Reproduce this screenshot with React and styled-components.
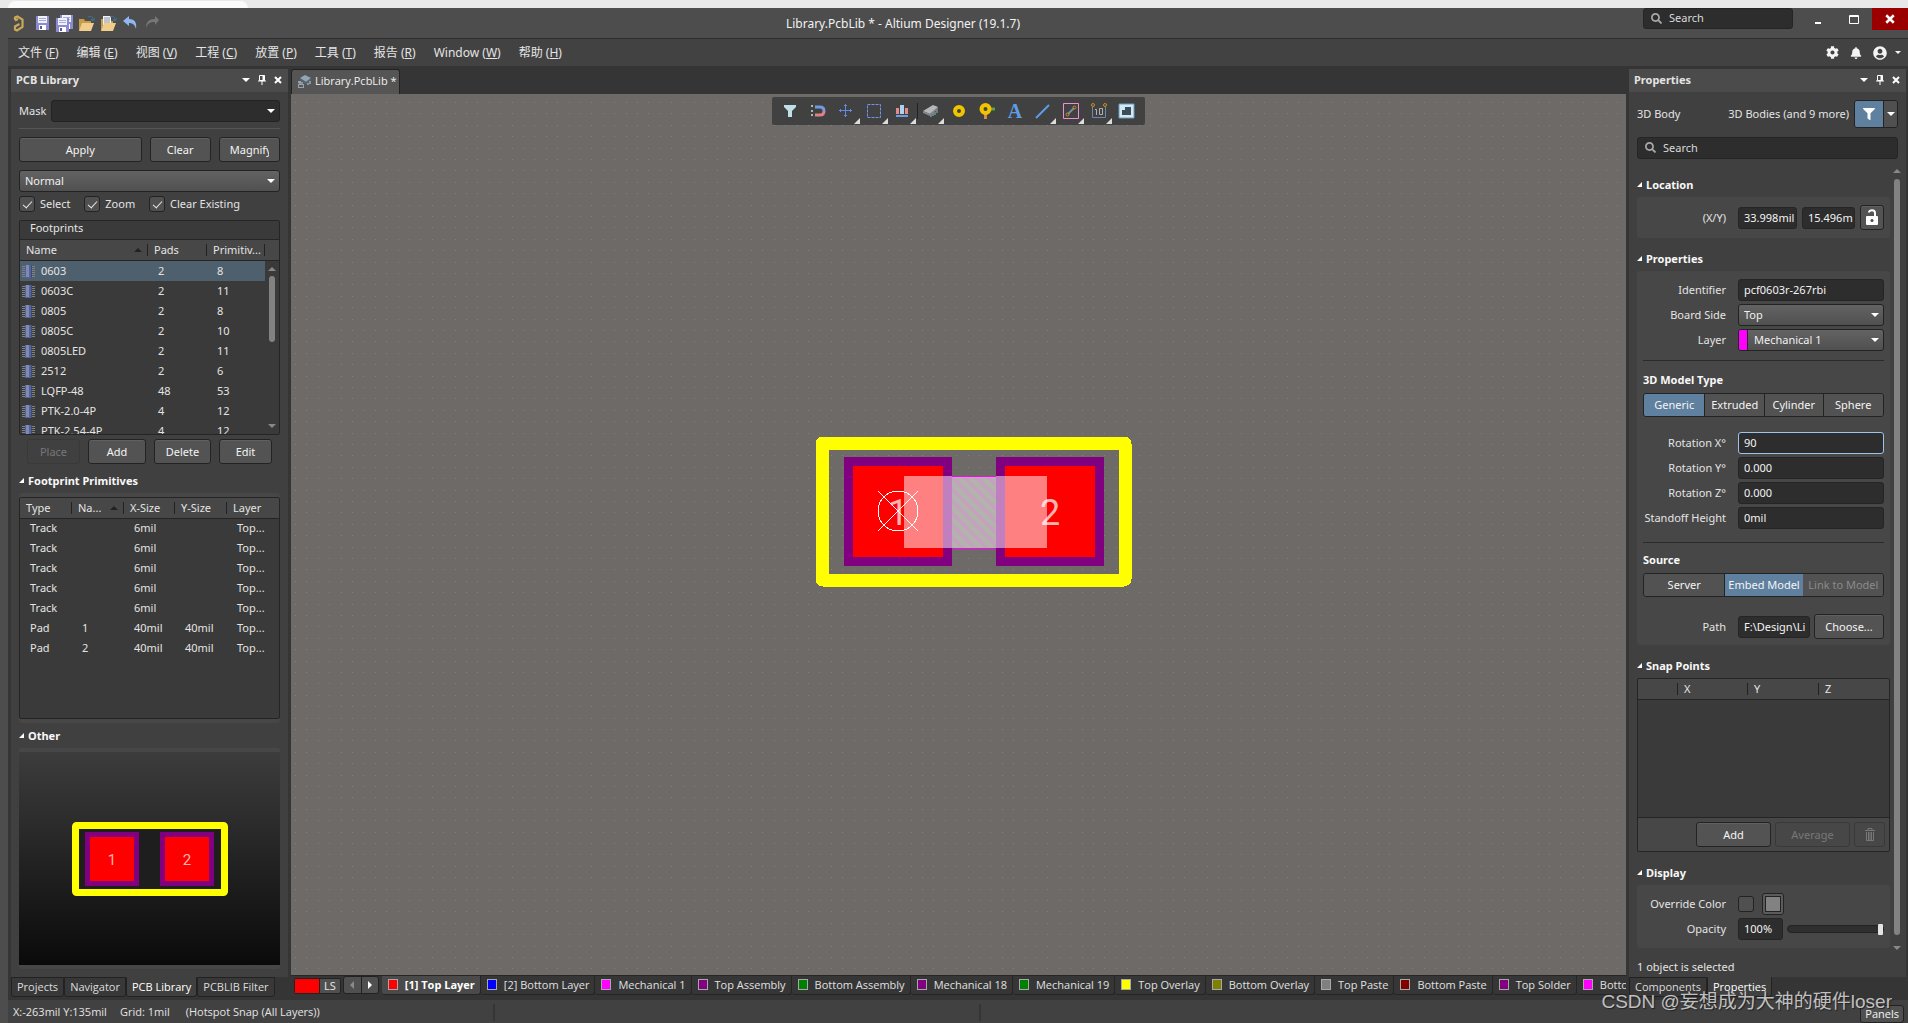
import { useState } from "react";
import styled, { createGlobalStyle, css } from "styled-components";
import { FaFilter, FaCog, FaBell, FaUserCircle, FaSearch } from "react-icons/fa";

const footprints = [
  ["0603", 2, 8],
  ["0603C", 2, 11],
  ["0805", 2, 8],
  ["0805C", 2, 10],
  ["0805LED", 2, 11],
  ["2512", 2, 6],
  ["LQFP-48", 48, 53],
  ["PTK-2.0-4P", 4, 12],
  ["PTK-2.54-4P", 4, 12],
];

const primitives = [
  ["Track", "", "6mil", "", "Top..."],
  ["Track", "", "6mil", "", "Top..."],
  ["Track", "", "6mil", "", "Top..."],
  ["Track", "", "6mil", "", "Top..."],
  ["Track", "", "6mil", "", "Top..."],
  ["Pad", "1", "40mil", "40mil", "Top..."],
  ["Pad", "2", "40mil", "40mil", "Top..."],
];

const layers = [
  ["[1] Top Layer", "#ff0000"],
  ["[2] Bottom Layer", "#0000ff"],
  ["Mechanical 1", "#ff00ff"],
  ["Top Assembly", "#800080"],
  ["Bottom Assembly", "#008000"],
  ["Mechanical 18", "#800080"],
  ["Mechanical 19", "#008000"],
  ["Top Overlay", "#ffff00"],
  ["Bottom Overlay", "#808000"],
  ["Top Paste", "#808080"],
  ["Bottom Paste", "#800000"],
  ["Top Solder", "#800080"],
  ["Bottom Solder", "#ff00ff"],
];

const menus = [
  ["文件", "F"],
  ["编辑", "E"],
  ["视图", "V"],
  ["工程", "C"],
  ["放置", "P"],
  ["工具", "T"],
  ["报告", "R"],
  ["Window", "W"],
  ["帮助", "H"],
];

/* ---------- icons ---------- */

const Down = () => (
  <svg width="8" height="4" viewBox="0 0 8 4">
    <path d="M0 0h8L4 4z" fill="currentColor" />
  </svg>
);

const Up = () => (
  <svg width="8" height="4" viewBox="0 0 8 4">
    <path d="M0 4h8L4 0z" fill="currentColor" />
  </svg>
);

const Pin = () => (
  <svg width="8" height="10" viewBox="0 0 8 10">
    <path d="M1.5 0.5h5v5h-5zM0 6h8M4 6v4" fill="none" stroke="currentColor" />
    <path d="M4.5 0h2v6h-2z" fill="currentColor" />
  </svg>
);

const Cross = ({ size = 8 }) => (
  <svg width={size} height={size} viewBox="0 0 8 8">
    <path d="M1 1l6 6M7 1l-6 6" stroke="currentColor" strokeWidth="2" />
  </svg>
);

const Fold = () => (
  <svg width="5" height="5" viewBox="0 0 5 5">
    <path d="M5 0v5H0z" fill="#fff" />
  </svg>
);

const Logo = () => (
  <svg width="12" height="17" viewBox="0 0 12 17">
    <path
      d="M2 5V2.5L4.500 1.500 9.500 4.500v7.500L4 15.500 2 14.500v-3l4.500-2.500M2 5.500l3-1.500"
      fill="none"
      stroke="#c9a857"
      strokeWidth="2.200"
    />
  </svg>
);

const Disk = ({ x = 0, y = 0 }) => (
  <g transform={`translate(${x} ${y})`}>
    <path d="M0 0h13v14H0z" fill="#8c8ad0" />
    <path d="M2 0h9v7H2z" fill="#eef0fa" />
    <path d="M3 2h7v1H3zM3 4h7v1H3z" fill="#a9abd8" />
    <path d="M3 9h7v5H3z" fill="#fff" />
    <path d="M4 10h2v3H4z" fill="#5b5aa0" />
  </g>
);

const Save = () => (
  <svg width="15" height="16" viewBox="0 0 15 16">
    <Disk x={1} y={1} />
  </svg>
);

const SaveAll = () => (
  <svg width="17" height="17" viewBox="0 0 17 17">
    <Disk x={4} />
    <path d="M0 3h13v14H0z" fill="#4d4d4d" />
    <Disk y={3} />
  </svg>
);

const Folder = ({ doc }) => (
  <svg width="17" height="17" viewBox="0 0 17 17">
    <path d="M1 4h5l1 2h6v9H1z" fill="#c79a4c" />
    {doc && <path d="M3 1h8v9H3z" fill="#f4f4f4" />}
    {doc && <path d="M4 3h6M4 5h6M4 7h6" stroke="#8894a8" />}
    <path d="M4 8h12l-3 8H1z" fill="#f0cd8a" />
    <path d="M10 2c3-2 5 0 5 3M13 4l2 2 2-3" fill="none" stroke="#38789c" />
  </svg>
);

const Undo = ({ flip }) => (
  <svg width="16" height="14" viewBox="0 0 16 14">
    <g transform={flip ? "translate(16 0) scale(-1 1)" : undefined}>
      {flip ? (
        <path
          d="M1 4l4-4v3c6 0 9 3 9 9-2-5-4-6-9-6v3z"
          fill="#777"
        />
      ) : (
        <path
          d="M1 5l6-5v3c6 0 8 4 7 10-1-4-3-6-7-6v3z"
          fill="#8fb8f2"
        />
      )}
    </g>
  </svg>
);

const LibIcon = () => (
  <svg width="15" height="15" viewBox="0 0 15 15">
    <path d="M3 4l5-3 6 3-5 4z" fill="#90a6b4" />
    <path d="M3 4l6 4v2L3 6zM9 8l5-4v2l-5 4z" fill="#53697a" />
    <path d="M3 7v3M5 8v3M11 9v2M13 7v3" stroke="#c7d4dd" />
    <path d="M1 7h3v2H1zM1 10h6v4H1z" fill="#9aa2a8" />
    <path d="M2 11h4v2H2z" fill="#4f5a62" />
  </svg>
);

const Chip = () => (
  <svg width="13" height="14" viewBox="0 0 13 14">
    <path
      d="M0 2.500h13M0 4.500h13M0 6.500h13M0 8.500h13M0 10.500h13M0 12.500h13"
      stroke="#7c8484"
    />
    <path d="M3 1h7v13H3z" fill="#56658f" />
    <path d="M4 1h3v12H4z" fill="#8088bc" />
    <path d="M9 1h1v13H9z" fill="#3c4a78" />
  </svg>
);

const LockIcon = () => (
  <svg width="14" height="17" viewBox="0 0 14 17">
    <path d="M4 3.500C4 0.500 10 0.500 10 4v4" fill="none" stroke="#fff" strokeWidth="2" />
    <path d="M1 8q0-1 1-1h10q1 0 1 1v7q0 1-1 1H2q-1 0-1-1z" fill="#fff" />
    <circle cx="7" cy="11.500" r="1.500" fill="#4a4a4a" />
  </svg>
);

const Trash = () => (
  <svg width="10" height="13" viewBox="0 0 10 13">
    <path d="M0 2.500h10M3 2V0.500h4V2" fill="none" stroke="currentColor" />
    <path
      d="M1.500 4v8.500h7V4M3.500 4v8M5 4v8M6.500 4v8"
      fill="none"
      stroke="currentColor"
    />
  </svg>
);

const toolIcons = [
  {
    name: "Filter",
    draw: <path d="M2 2h12v2l-4 4v6H6V8L2 4z" fill="#bfe0e6" />,
  },
  {
    name: "Snapping",
    draw: (
      <>
        <path d="M1 3h2M1 8h2M1 12h2" stroke="#9fbfae" strokeWidth="2" />
        <path d="M5 4h5q4 0 4 4" fill="none" stroke="#6f9be0" strokeWidth="3" />
        <path d="M5 12h5q4 0 4-4" fill="none" stroke="#e08088" strokeWidth="3" />
      </>
    ),
  },
  {
    name: "Move",
    corner: true,
    draw: (
      <path
        d="M7.500 1v13M1 7.500h13M6 2.500h3M6 12.500h3M2.500 6v3M12.500 6v3"
        stroke="#5f8ae0"
        fill="none"
      />
    ),
  },
  {
    name: "Select area",
    corner: true,
    draw: (
      <path
        d="M1.500 1.500h13v13h-13z"
        fill="none"
        stroke="#7394ee"
        strokeDasharray="3 1"
      />
    ),
  },
  {
    name: "Align",
    corner: true,
    draw: (
      <>
        <path d="M2 5h3v6H2zM11 5h3v6h-3z" fill="#e8888c" />
        <path d="M6 2h4v9H6z" fill="#a8d4ee" />
        <path d="M2 13h12" stroke="#6c9ce4" strokeWidth="2" />
      </>
    ),
  },
  {
    name: "Component",
    corner: true,
    split: true,
    draw: (
      <>
        <path d="M1 8l10-6 5 2-8 7z" fill="#b4b8ba" />
        <path d="M1 8l7 3v2l-7-3zM8 11l8-7v2l-8 7z" fill="#84888a" />
        <path d="M9 12v2M11 10v3M13 9v3M15 7v3" stroke="#8dbccc" />
      </>
    ),
  },
  {
    name: "Pad",
    draw: <circle cx="9" cy="8" r="4" fill="none" stroke="#f0c400" strokeWidth="4" />,
  },
  {
    name: "Via",
    draw: (
      <>
        <path d="M9 6h8" stroke="#54a83c" strokeWidth="3" />
        <path d="M7.500 8v8" stroke="#d0903c" strokeWidth="3" />
        <circle cx="7.500" cy="6" r="4" fill="#444" stroke="#f0c400" strokeWidth="4" />
      </>
    ),
  },
  {
    name: "String",
    draw: (
      <text x="9" y="15" textAnchor="middle" fontFamily="Liberation Serif, serif" fontSize="20" fontWeight="bold" fill="#5f9ce6">
        A
      </text>
    ),
  },
  {
    name: "Line",
    corner: true,
    draw: <path d="M2 15L15 2" stroke="#5f9ce6" strokeWidth="2" />,
  },
  {
    name: "Keepout",
    corner: true,
    draw: (
      <>
        <path d="M1.500 0.500h15v15H1.500z" fill="none" stroke="#f08cd8" />
        <path d="M6 11l6-6" stroke="#7488b0" strokeWidth="2" />
        <circle cx="5.500" cy="11.500" r="1.500" fill="none" stroke="#c8901c" />
        <circle cx="12.500" cy="4.500" r="1.500" fill="none" stroke="#c8901c" />
      </>
    ),
  },
  {
    name: "Dimension",
    corner: true,
    draw: (
      <>
        <path d="M2.500 4v10.500h13V4" fill="none" stroke="#6c88ac" />
        <circle cx="3" cy="2" r="1.500" fill="none" stroke="#c8901c" />
        <circle cx="15" cy="2" r="1.500" fill="none" stroke="#c8901c" />
        <path d="M5 6.500h1.500V12M9.500 5.500h3v6h-3z" fill="none" stroke="#b0b0b0" />
      </>
    ),
  },
  {
    name: "Region",
    draw: (
      <>
        <path d="M1 1h15v14H1z" fill="#cfeaf2" stroke="#6c9cc4" />
        <path d="M7 4h6v8H4V7h3z" fill="#3c4c5c" />
      </>
    ),
  },
];

/* ---------- footprint drawings ---------- */

const Board = () => (
  <BoardSvg aria-label="Footprint editor">
    <defs>
      <pattern id="grid" width="57" height="57" patternUnits="userSpaceOnUse">
        {[4, 15, 27, 38, 50].map((y) =>
          [4, 15, 27, 38, 50].map((x) => (
            <rect key={x + "-" + y} x={x} y={y + 4} width="1" height="1" fill="#84807d" />
          ))
        )}
      </pattern>
      <pattern id="hatch" width="12" height="12" patternUnits="userSpaceOnUse">
        <path d="M-1 5l8 8M5 -1l8 8M-1 11l2 2M11 -1l2 2" stroke="#bab6ac" />
        <path d="M-1 -1l14 14" stroke="#ff70ff" />
      </pattern>
    </defs>
    <rect width="100%" height="100%" fill="url(#grid)" />
    <g transform="translate(525 343)">
      <rect x="6" y="6" width="303" height="137" rx="1" fill="none" stroke="#ff0" strokeWidth="13" strokeLinejoin="round" />
      <rect x="28" y="20" width="108" height="109" fill="#800080" />
      <rect x="37" y="29" width="90" height="91" fill="#f00" />
      <rect x="180" y="20" width="108" height="109" fill="#800080" />
      <rect x="189" y="29" width="90" height="91" fill="#f00" />
      <PadName x="82" y="88" $size={36}>1</PadName>
      <PadName x="234" y="88" $size={36}>2</PadName>
      <rect x="88" y="39" width="143" height="72" fill="#fff" fillOpacity="0.5" />
      <rect x="136" y="39" width="44" height="72" fill="#b4b0ae" />
      <rect x="136" y="39" width="44" height="72" fill="url(#hatch)" />
      <path d="M136 39.500h44M136 111.500h44" stroke="#f0f" />
      <circle cx="82" cy="74" r="20" fill="none" stroke="#fff" />
      <path d="M62 54l40 40M102 54l-40 40" stroke="#fff" />
    </g>
  </BoardSvg>
);

const Preview = () => (
  <svg width="156" height="75" viewBox="0 0 156 75">
    <rect x="3.500" y="3.500" width="149" height="67" rx="1" fill="#1e1e1e" stroke="#ff0" strokeWidth="7" strokeLinejoin="round" />
    <rect x="13" y="10" width="54" height="54" fill="#800080" />
    <rect x="18" y="15" width="44" height="44" fill="#f00" />
    <rect x="88" y="10" width="54" height="54" fill="#800080" />
    <rect x="93" y="15" width="44" height="44" fill="#f00" />
    <PadName x="40" y="43" $size={15}>1</PadName>
    <PadName x="115" y="43" $size={15}>2</PadName>
  </svg>
);

/* ---------- shared pieces ---------- */

function PanelTop({ title }) {
  return (
    <PanelHeader>
      <PanelTitle>{title}</PanelTitle>
      <IconButton aria-label="Menu"><Down /></IconButton>
      <IconButton aria-label="Pin"><Pin /></IconButton>
      <IconButton aria-label="Close"><Cross /></IconButton>
    </PanelHeader>
  );
}

function Dropdown({ id, label, options, dark, indent, swatch }) {
  return (
    <SelectWrap>
      <Select id={id} aria-label={label} $dark={dark} $indent={indent}>
        {options.map((o) => (
          <option key={o}>{o}</option>
        ))}
      </Select>
      {swatch && <SelectSwatch />}
      <SelectArrow><Down /></SelectArrow>
    </SelectWrap>
  );
}

function Field({ id, label, value, active }) {
  const [text, setText] = useState(value);
  return (
    <FormRow>
      <FormLabel htmlFor={id}>{label}</FormLabel>
      <TextInput id={id} value={text} onChange={(e) => setText(e.target.value)} $active={active} />
    </FormRow>
  );
}

function LibraryPanel() {
  return (
    <Panel>
      <PanelTop title="PCB Library" />
      <LibraryBody>
        <MaskRow>
          <label htmlFor="mask">Mask</label>
          <Dropdown id="mask" options={[""]} dark />
        </MaskRow>
        <Rule />
        <ActionRow>
          <Button>Apply</Button>
          <Button>Clear</Button>
          <Button><Clip>Magnify</Clip></Button>
        </ActionRow>
        <Dropdown label="Mode" options={["Normal"]} />
        <CheckRow>
          <Check><CheckBox defaultChecked />Select</Check>
          <Check><CheckBox defaultChecked />Zoom</Check>
          <Check><CheckBox defaultChecked />Clear Existing</Check>
        </CheckRow>
        <FootprintBox>
          <BoxCaption>Footprints</BoxCaption>
          <Table>
            <colgroup>
              <col />
              <col width="59" />
              <col width="58" />
              <col width="14" />
            </colgroup>
            <thead>
              <tr>
                <Th><HeadCell>Name<Sort><Up /></Sort></HeadCell></Th>
                <Th><HeadCell>Pads</HeadCell></Th>
                <Th><HeadCell>Primitiv...</HeadCell></Th>
                <Th />
              </tr>
            </thead>
            <tbody>
              {footprints.map(([name, pads, count], i) => (
                <Row key={name} $selected={i === 0}>
                  <NameCell><Chip />{name}</NameCell>
                  <Td>{pads}</Td>
                  <Td>{count}</Td>
                </Row>
              ))}
            </tbody>
          </Table>
          <ListScroll>
            <Up />
            <ListThumb />
            <Down />
          </ListScroll>
        </FootprintBox>
        <EditRow>
          <Button disabled>Place</Button>
          <Button>Add</Button>
          <Button>Delete</Button>
          <Button>Edit</Button>
        </EditRow>
        <SectionTitle><Fold />Footprint Primitives</SectionTitle>
        <Inset>
          <PrimitiveBox>
            <Table>
              <colgroup>
                <col width="52" />
                <col width="52" />
                <col width="51" />
                <col width="52" />
                <col />
              </colgroup>
              <thead>
                <tr>
                  <Th><HeadCell>Type</HeadCell></Th>
                  <Th><HeadCell>Na...<Sort><Up /></Sort></HeadCell></Th>
                  <Th><HeadCell>X-Size</HeadCell></Th>
                  <Th><HeadCell>Y-Size</HeadCell></Th>
                  <Th><HeadCell $last>Layer</HeadCell></Th>
                </tr>
              </thead>
              <tbody>
                {primitives.map((row, i) => (
                  <Row key={i}>
                    {row.map((cell, j) => (
                      <Td key={j}>{cell}</Td>
                    ))}
                  </Row>
                ))}
              </tbody>
            </Table>
          </PrimitiveBox>
        </Inset>
        <SectionTitle><Fold />Other</SectionTitle>
        <PreviewInset>
          <PreviewBox><Preview /></PreviewBox>
        </PreviewInset>
      </LibraryBody>
      <PanelTabs>
        <PanelTab>Projects</PanelTab>
        <PanelTab>Navigator</PanelTab>
        <PanelTab $active>PCB Library</PanelTab>
        <PanelTab>PCBLIB Filter</PanelTab>
      </PanelTabs>
    </Panel>
  );
}

function PropertiesPanel() {
  return (
    <Panel>
      <PanelTop title="Properties" />
      <PropertiesBody>
        <ObjectRow>
          <ObjectName>3D Body</ObjectName>
          <span>3D Bodies (and 9 more)</span>
          <FilterGroup>
            <FilterButton aria-label="Filter"><FaFilter size={12} /></FilterButton>
            <FilterMore aria-label="Filter options"><Down /></FilterMore>
          </FilterGroup>
        </ObjectRow>
        <SearchBox>
          <FaSearch size={11} />
          <SearchInput placeholder="Search" aria-label="Search properties" />
        </SearchBox>
        <ScrollArea>
          <Sections>
            <SectionTitle><Fold />Location</SectionTitle>
            <Group>
              <FormRow>
                <FormLabel htmlFor="loc-x">(X/Y)</FormLabel>
                <XYFields>
                  <TextInput id="loc-x" defaultValue="33.998mil" />
                  <TextInput aria-label="Y" defaultValue="15.496m" />
                  <LockButton aria-label="Lock"><LockIcon /></LockButton>
                </XYFields>
              </FormRow>
            </Group>
            <SectionTitle $spaced><Fold />Properties</SectionTitle>
            <Group $tight>
              <Fields>
                <Field id="identifier" label="Identifier" value="pcf0603r-267rbi" />
                <FormRow>
                  <FormLabel htmlFor="side">Board Side</FormLabel>
                  <Dropdown id="side" options={["Top", "Bottom"]} />
                </FormRow>
                <FormRow>
                  <FormLabel htmlFor="layer">Layer</FormLabel>
                  <Dropdown id="layer" options={["Mechanical 1"]} indent swatch />
                </FormRow>
              </Fields>
              <DarkRule />
              <SubTitle>3D Model Type</SubTitle>
              <Segments $columns="61fr 60fr 59fr 61fr">
                <Segment $on>Generic</Segment>
                <Segment>Extruded</Segment>
                <Segment>Cylinder</Segment>
                <Segment>Sphere</Segment>
              </Segments>
              <Fields>
                <Field id="rot-x" label="Rotation X°" value="90" active />
                <Field id="rot-y" label="Rotation Y°" value="0.000" />
                <Field id="rot-z" label="Rotation Z°" value="0.000" />
                <Field id="standoff" label="Standoff Height" value="0mil" />
              </Fields>
              <DarkRule $far />
              <SubTitle>Source</SubTitle>
              <Segments $columns="81fr 79fr 81fr" $far>
                <Segment>Server</Segment>
                <Segment $on>Embed Model</Segment>
                <Segment disabled>Link to Model</Segment>
              </Segments>
              <FormRow>
                <FormLabel htmlFor="path">Path</FormLabel>
                <PathFields>
                  <TextInput id="path" defaultValue="F:\Design\Li" />
                  <Button>Choose...</Button>
                </PathFields>
              </FormRow>
            </Group>
            <SectionTitle $spaced><Fold />Snap Points</SectionTitle>
            <SnapBox>
              <Table>
                <colgroup>
                  <col width="40" />
                  <col width="70" />
                  <col width="71" />
                  <col />
                </colgroup>
                <thead>
                  <tr>
                    <Th><HeadCell /></Th>
                    <Th><HeadCell>X</HeadCell></Th>
                    <Th><HeadCell>Y</HeadCell></Th>
                    <Th><HeadCell $last>Z</HeadCell></Th>
                  </tr>
                </thead>
              </Table>
              <SnapFooter>
                <Button>Add</Button>
                <Button disabled>Average</Button>
                <Button disabled aria-label="Delete"><Trash /></Button>
              </SnapFooter>
            </SnapBox>
            <SectionTitle $spaced><Fold />Display</SectionTitle>
            <Group>
              <Fields>
                <FormRow>
                  <FormLabel htmlFor="override">Override Color</FormLabel>
                  <ColorFields>
                    <CheckBox id="override" />
                    <ColorButton aria-label="Color"><ColorFill /></ColorButton>
                  </ColorFields>
                </FormRow>
                <FormRow>
                  <FormLabel htmlFor="opacity">Opacity</FormLabel>
                  <OpacityFields>
                    <TextInput id="opacity" defaultValue="100%" />
                    <Slider aria-label="Opacity slider" defaultValue="100" />
                  </OpacityFields>
                </FormRow>
              </Fields>
            </Group>
          </Sections>
          <SideScroll>
            <Up />
            <SideThumb />
            <Down />
          </SideScroll>
        </ScrollArea>
        <Selected>1 object is selected</Selected>
      </PropertiesBody>
      <PanelTabs>
        <PanelTab>Components</PanelTab>
        <PanelTab $active>Properties</PanelTab>
      </PanelTabs>
    </Panel>
  );
}

export default function App() {
  return (
    <Window>
      <GlobalStyle />
      <BrowserStrip><BrowserTab /></BrowserStrip>
      <TitleBar>
        <QuickTools>
          <Logo />
          <QuickButton aria-label="Save"><Save /></QuickButton>
          <QuickButton aria-label="Save all"><SaveAll /></QuickButton>
          <QuickButton aria-label="Open"><Folder /></QuickButton>
          <QuickButton aria-label="Open project"><Folder doc /></QuickButton>
          <QuickButton aria-label="Undo"><Undo /></QuickButton>
          <QuickButton aria-label="Redo"><Undo flip /></QuickButton>
        </QuickTools>
        <AppTitle>Library.PcbLib * - Altium Designer (19.1.7)</AppTitle>
        <WindowTools>
          <TitleSearch>
            <FaSearch size={11} />
            <SearchInput placeholder="Search" aria-label="Search" />
          </TitleSearch>
          <WindowButton aria-label="Minimize">
            <svg width="10" height="10"><path d="M2 8h6v2H2z" fill="#fff" /></svg>
          </WindowButton>
          <WindowButton aria-label="Maximize">
            <svg width="10" height="9"><path d="M0.500 0.500h9v8h-9zM0 1.500h10" fill="none" stroke="#fff" /></svg>
          </WindowButton>
          <WindowButton aria-label="Close" $close><Cross size={10} /></WindowButton>
        </WindowTools>
      </TitleBar>
      <Frame>
        <MenuBar>
          {menus.map(([name, key]) => (
            <MenuItem key={key}>
              {name} (<u>{key}</u>)
            </MenuItem>
          ))}
          <UserTools>
            <FaCog size={13} />
            <FaBell size={12} />
            <FaUserCircle size={14} />
            <SmallDown>
              <svg width="6" height="3"><path d="M0 0h6L3 3z" fill="currentColor" /></svg>
            </SmallDown>
          </UserTools>
        </MenuBar>
        <Main>
          <LibraryPanel />
          <Editor>
            <DocTabs>
              <DocTab><LibIcon />Library.PcbLib *</DocTab>
            </DocTabs>
            <Canvas>
              <Board />
              <Toolbar>
                {toolIcons.map((t) => (
                  <ToolButton key={t.name} aria-label={t.name} $corner={t.corner} $split={t.split}>
                    <svg width="16" height="16" viewBox="0 0 16 16" overflow="visible">{t.draw}</svg>
                  </ToolButton>
                ))}
              </Toolbar>
            </Canvas>
            <LayerBar>
              <LayerSet><LayerSetColor />LS</LayerSet>
              <Pager>
                <PagerButton disabled aria-label="Previous layers">
                  <svg width="4" height="8"><path d="M4 0v8L0 4z" fill="currentColor" /></svg>
                </PagerButton>
                <PagerButton aria-label="Next layers">
                  <svg width="4" height="8"><path d="M0 0v8l4-4z" fill="currentColor" /></svg>
                </PagerButton>
              </Pager>
              {layers.map(([name, color], i) => (
                <LayerTab key={name} $active={i === 0}>
                  <LayerColor $color={color} />
                  {name}
                </LayerTab>
              ))}
            </LayerBar>
          </Editor>
          <PropertiesPanel />
        </Main>
        <StatusBar>
          <StatusMain>
            <span>X:-263mil Y:135mil</span>
            <span>Grid: 1mil</span>
            <StatusHint>(Hotspot Snap (All Layers))</StatusHint>
          </StatusMain>
          <StatusCell />
          <PanelsButton>Panels</PanelsButton>
        </StatusBar>
      </Frame>
      <Watermark>CSDN @妄想成为大神的硬件loser</Watermark>
    </Window>
  );
}

/* ---------- styles ---------- */

const narrowFont = `"Open Sans", "Noto Sans", sans-serif`;

const GlobalStyle = createGlobalStyle`
  * { box-sizing: border-box; }
  body {
    margin: 0;
    background: #4d4d4d;
    color: #e4e4e4;
    font: 11px/16px "Noto Sans", "Noto Sans CJK SC", sans-serif;
  }
  button, input, select {
    margin: 0;
    font: inherit;
    color: inherit;
  }
  svg { flex: none; display: block; }
`;

const Window = styled.div`
  position: relative;
  display: flex;
  flex-direction: column;
  height: 100vh;
  overflow: hidden;
  white-space: nowrap;
`;
const BrowserStrip = styled.div`
  flex: none;
  height: 8px;
  padding: 1px 8px 0;
  background: #e8e8e8;
`;
const BrowserTab = styled.div`
  width: 240px;
  height: 7px;
  border-radius: 7px 7px 0 0;
  background: #fafafa;
`;
const TitleBar = styled.header`
  flex: none;
  display: flex;
  height: 30px;
  background: #4d4d4d;
`;
const QuickTools = styled.div`
  display: flex;
  align-items: center;
  padding-left: 13px;
`;
const IconButton = styled.button`
  display: flex;
  align-items: center;
  justify-content: center;
  padding: 0;
  border: 0;
  background: none;
`;
const QuickButton = styled(IconButton)`
  width: 22px;
  svg + & {
    margin-left: 6px;
  }
`;
const AppTitle = styled.h1`
  flex: 1;
  margin: 0;
  font-size: 12px;
  font-weight: normal;
  line-height: 31px;
  text-align: center;
  color: #f2f2f2;
`;
const WindowTools = styled.div`
  display: flex;
  align-items: flex-start;
`;
const searchBox = css`
  display: flex;
  align-items: center;
  gap: 7px;
  padding: 0 8px 1px 7px;
  border: 1px solid #252525;
  border-radius: 3px;
  background: #2d2d2d;
  color: #a8a8a8;
`;
const TitleSearch = styled.div`
  ${searchBox}
  width: 150px;
  height: 21px;
  margin-right: 7px;
`;
const SearchBox = styled.div`
  ${searchBox}
  height: 22px;
  margin: 9px 0 0;
`;
const SearchInput = styled.input`
  flex: 1;
  min-width: 0;
  padding: 0;
  border: 0;
  outline: 0;
  background: none;
  color: #e4e4e4;
  &::placeholder {
    color: #dadada;
  }
`;
const WindowButton = styled.button`
  display: flex;
  align-items: center;
  justify-content: center;
  width: 36px;
  height: 22px;
  padding: 0;
  border: 0;
  color: #fff;
  background: ${(p) => (p.$close ? "#9b0000" : "none")};
`;
const Frame = styled.div`
  flex: 1;
  min-height: 0;
  display: flex;
  flex-direction: column;
  margin-left: 8px;
`;
const MenuBar = styled.nav`
  flex: none;
  display: flex;
  align-items: center;
  gap: 18px;
  height: 28px;
  padding: 0 7px 0 10px;
  border-top: 1px solid #2d2d2d;
  background: #424242;
`;
const MenuItem = styled.button`
  padding: 0;
  border: 0;
  background: none;
  font-size: 12px;
`;
const UserTools = styled.div`
  display: flex;
  align-items: center;
  gap: 11px;
  margin-left: auto;
  color: #f4f4f4;
`;
const SmallDown = styled.span`
  margin-left: -3px;
`;
const Main = styled.main`
  flex: 1;
  min-height: 0;
  display: grid;
  grid-template-columns: 277px minmax(0, 1fr) 277px;
  gap: 3px;
  padding: 0 2px 0 3px;
  background: #353535;
`;
const Panel = styled.section`
  display: flex;
  flex-direction: column;
  min-height: 0;
  padding-top: 3px;
`;
const PanelHeader = styled.header`
  flex: none;
  display: flex;
  align-items: center;
  gap: 8px;
  height: 23px;
  padding: 0 6px 1px 5px;
  background: #4b4b4b;
  color: #fff;
`;
const PanelTitle = styled.h2`
  flex: 1;
  margin: 0;
  font-size: 11px;
  color: #e4e4e4;
`;
const LibraryBody = styled.div`
  flex: 1;
  min-height: 0;
  display: flex;
  flex-direction: column;
  padding: 8px;
  background: #404040;
`;
const PropertiesBody = styled(LibraryBody)`
  padding-bottom: 0;
`;
const MaskRow = styled.div`
  display: grid;
  grid-template-columns: 24px 1fr;
  align-items: center;
  gap: 8px;
`;
const Rule = styled.div`
  height: 1px;
  margin: 6px 0 8px;
  background: #565656;
`;
const Button = styled.button`
  display: flex;
  align-items: center;
  justify-content: center;
  height: 25px;
  padding: 0 8px;
  border: 1px solid #232323;
  border-radius: 3px;
  background: #535353;
  box-shadow: inset 0 1px #606060;
  color: #f4f4f4;
  &:disabled {
    border-color: #393939;
    background: none;
    box-shadow: none;
    color: #777;
  }
`;
const Clip = styled.span`
  min-width: 0;
  overflow: hidden;
`;
const ActionRow = styled.div`
  display: grid;
  grid-template-columns: 2fr 1fr 1fr;
  gap: 8px;
  margin-bottom: 8px;
  ${Button} {
    min-width: 0;
    padding: 0 10px;
  }
`;
const SelectWrap = styled.div`
  position: relative;
  display: grid;
  min-width: 0;
`;
const Select = styled.select`
  appearance: none;
  height: 22px;
  padding: 0 20px 0 ${(p) => (p.$indent ? 15 : 5)}px;
  border: 1px solid #232323;
  border-radius: 3px;
  outline: 0;
  background: ${(p) => (p.$dark ? "#2d2d2d" : "linear-gradient(#636363, #505050)")};
  color: #f0f0f0;
`;
const SelectSwatch = styled.span`
  position: absolute;
  top: 1px;
  bottom: 1px;
  left: 1px;
  width: 9px;
  border-right: 1px solid #232323;
  border-radius: 2px 0 0 2px;
  background: #f0f;
`;
const SelectArrow = styled.span`
  position: absolute;
  top: 9px;
  right: 5px;
  color: #fff;
  pointer-events: none;
`;
const CheckRow = styled.div`
  display: flex;
  justify-content: space-between;
  margin: 4px 0 8px;
  padding-right: 40px;
`;
const Check = styled.label`
  display: flex;
  align-items: center;
  gap: 5px;
`;
const CheckBox = styled.input.attrs({ type: "checkbox" })`
  appearance: none;
  position: relative;
  width: 16px;
  height: 16px;
  border: 1px solid #232323;
  border-radius: 3px;
  background: #505050;
  &:checked::after {
    content: "";
    position: absolute;
    left: 5px;
    top: 2px;
    width: 4px;
    height: 8px;
    border: solid #e8e8e8;
    border-width: 0 1px 1px 0;
    transform: rotate(42deg);
  }
`;
const box = css`
  border: 1px solid #252525;
  border-radius: 2px;
  background: #3a3a3a;
  overflow: hidden;
`;
const FootprintBox = styled.div`
  ${box}
  position: relative;
  flex: none;
  height: 215px;
`;
const BoxCaption = styled.div`
  height: 19px;
  padding-left: 10px;
  border-bottom: 1px solid #252525;
  line-height: 14px;
`;
const Table = styled.table`
  width: 100%;
  table-layout: fixed;
  border-collapse: collapse;
`;
const Th = styled.th`
  height: 20px;
  padding: 0;
  border-bottom: 1px solid #252525;
  background: #474747;
  font-weight: normal;
  text-align: left;
`;
const HeadCell = styled.div`
  display: flex;
  align-items: center;
  height: 12px;
  padding-left: 6px;
  border-right: ${(p) => (p.$last ? 0 : 1)}px solid #222;
  line-height: 12px;
`;
const Sort = styled.span`
  margin: 0 5px 0 auto;
  color: #222;
`;
const Td = styled.td`
  height: 20px;
  padding: 0 0 0 10px;
`;
const NameCell = styled(Td)`
  display: flex;
  align-items: center;
  gap: 6px;
  padding-left: 2px;
`;
const Row = styled.tr`
  ${Td} {
    background: ${(p) => (p.$selected ? "#4e606e" : "none")};
  }
`;
const scroll = css`
  display: flex;
  flex-direction: column;
  align-items: center;
  color: #888;
`;
const ListScroll = styled.div`
  ${scroll}
  position: absolute;
  top: 40px;
  right: 0;
  bottom: 0;
  width: 14px;
  padding: 6px 0;
`;
const ListThumb = styled.div`
  width: 6px;
  height: 66px;
  margin: 5px 0 auto;
  border-radius: 3px;
  background: #828282;
`;
const EditRow = styled.div`
  display: grid;
  grid-template-columns: 53px 58px 57px 53px;
  justify-content: space-between;
  margin: 4px 0;
  padding: 0 8px;
`;
const SectionTitle = styled.h3`
  flex: none;
  display: flex;
  align-items: center;
  gap: 4px;
  height: 25px;
  margin: ${(p) => (p.$spaced ? 8 : 0)}px 0 0;
  font-size: 11px;
  color: #f8f8f8;
`;
const Inset = styled.div`
  flex: none;
  padding: 4px 0;
  border-radius: 3px;
  background: #474747;
`;
const PrimitiveBox = styled.div`
  ${box}
  height: 222px;
`;
const PreviewInset = styled(Inset)`
  flex: 1;
  display: flex;
  min-height: 0;
`;
const PreviewBox = styled.div`
  flex: 1;
  display: flex;
  align-items: center;
  justify-content: center;
  padding-top: 2px;
  background: linear-gradient(#3c3c3c, #0a0a0a);
`;
const PanelTabs = styled.div`
  flex: none;
  display: flex;
  height: 23px;
`;
const PanelTab = styled.button`
  height: 20px;
  padding: 0 5px;
  border: 1px solid #222;
  border-top-color: ${(p) => (p.$active ? "#404040" : "#222")};
  border-radius: 0 0 3px 3px;
  background: ${(p) => (p.$active ? "#404040" : "#383838")};
  color: ${(p) => (p.$active ? "#fff" : "#dcdcdc")};
  font-family: ${narrowFont};
`;
const Editor = styled.section`
  display: flex;
  flex-direction: column;
  min-width: 0;
`;
const DocTabs = styled.div`
  flex: none;
  display: flex;
  align-items: flex-end;
  height: 28px;
`;
const DocTab = styled.button`
  display: flex;
  align-items: center;
  gap: 3px;
  height: 25px;
  padding: 0 2px 2px 5px;
  border: 1px solid #222;
  border-bottom: 0;
  border-radius: 3px 3px 0 0;
  background: #555;
  color: #f0f0f0;
  font-family: ${narrowFont};
`;
const Canvas = styled.div`
  position: relative;
  flex: 1;
  min-height: 0;
  display: flex;
  justify-content: center;
  align-items: flex-start;
  overflow: hidden;
  background: #6e6a68;
`;
const BoardSvg = styled.svg`
  position: absolute;
  inset: 0;
  width: 100%;
  height: 100%;
  shape-rendering: crispEdges;
`;
const PadName = styled.text`
  font: ${(p) => p.$size}px Roboto, sans-serif;
  fill: #ffb4b4;
  text-anchor: middle;
`;
const Toolbar = styled.div`
  position: relative;
  display: flex;
  margin-top: 3px;
  padding: 0 4px 0 5px;
  border-radius: 2px;
  background: #414141;
`;
const ToolButton = styled.button`
  position: relative;
  display: flex;
  align-items: center;
  justify-content: center;
  width: 28px;
  height: 28px;
  padding: 0 3px 0 0;
  border: 0;
  background: none;
  &::before {
    content: "";
    display: ${(p) => (p.$split ? "block" : "none")};
    position: absolute;
    left: 0;
    top: 6px;
    width: 1px;
    height: 16px;
    background: #222;
  }
  &::after {
    content: "";
    display: ${(p) => (p.$corner ? "block" : "none")};
    position: absolute;
    right: 1px;
    bottom: 1px;
    border: 3px solid transparent;
    border-right-color: #ddd;
    border-bottom-color: #ddd;
  }
`;
const LayerBar = styled.div`
  flex: none;
  display: flex;
  align-items: flex-start;
  height: 25px;
  border-top: 1px solid #252525;
  overflow: hidden;
`;
const LayerSet = styled.button`
  flex: none;
  display: flex;
  align-items: center;
  gap: 4px;
  height: 16px;
  margin: 2px 2px 0 3px;
  padding: 0 4px 0 0;
  border: 1px solid #222;
  border-radius: 2px;
  background: #505050;
  line-height: 14px;
`;
const LayerSetColor = styled.span`
  width: 25px;
  height: 14px;
  border-right: 1px solid #222;
  background: #f00;
`;
const Pager = styled.div`
  flex: none;
  display: flex;
  height: 18px;
  margin-right: 3px;
  border: 1px solid #222;
  border-radius: 3px;
  background: #505050;
`;
const PagerButton = styled.button`
  display: flex;
  align-items: center;
  justify-content: center;
  width: 17px;
  padding: 0;
  border: 0;
  background: none;
  color: #fff;
  & + & {
    border-left: 1px solid #222;
  }
  &:disabled {
    color: #8a8a8a;
  }
`;
const LayerTab = styled.button`
  flex: none;
  display: flex;
  align-items: center;
  gap: 7px;
  height: 19px;
  padding: 0 5px 1px 6px;
  border: solid #252525;
  border-width: 0 1px 1px 0;
  border-radius: 0 0 3px 3px;
  background: ${(p) => (p.$active ? "#4a4a4a" : "#363636")};
  color: ${(p) => (p.$active ? "#fff" : "#e0e0e0")};
  font-family: ${narrowFont};
  font-weight: ${(p) => (p.$active ? "bold" : "normal")};
`;
const LayerColor = styled.span`
  width: 10px;
  height: 11px;
  border: 1px solid #a8a8a8;
  background: ${(p) => p.$color};
`;
const ObjectRow = styled.div`
  flex: none;
  display: flex;
  align-items: center;
  height: 28px;
`;
const ObjectName = styled.span`
  flex: 1;
`;
const FilterGroup = styled.div`
  display: flex;
  height: 28px;
  margin-left: 5px;
  border: 1px solid #232323;
  border-radius: 3px;
  overflow: hidden;
`;
const FilterButton = styled.button`
  display: flex;
  align-items: center;
  justify-content: center;
  width: 28px;
  padding: 0;
  border: 0;
  background: #6080a0;
  color: #fff;
`;
const FilterMore = styled(FilterButton)`
  width: 14px;
  border-left: 1px solid #232323;
  background: #505050;
`;
const ScrollArea = styled.div`
  flex: 1;
  min-height: 0;
  display: flex;
  gap: 3px;
  margin-right: -5px;
`;
const Sections = styled.div`
  flex: 1;
  min-width: 0;
  padding-top: 13px;
`;
const SideScroll = styled.div`
  ${scroll}
  width: 8px;
  padding: 10px 0 7px;
  margin-right: 2px;
`;
const SideThumb = styled.div`
  flex: 1;
  width: 6px;
  margin: 6px 0 11px;
  border-radius: 3px;
  background: #828282;
`;
const Group = styled.div`
  padding: 8px 6px ${(p) => (p.$tight ? 6 : 8)}px;
  border-radius: 3px;
  background: #474747;
`;
const Fields = styled.div`
  display: grid;
  gap: 3px;
`;
const FormRow = styled.div`
  display: grid;
  grid-template-columns: 83px minmax(0, 1fr);
  gap: 12px;
  align-items: center;
`;
const FormLabel = styled.label`
  display: flex;
  justify-content: flex-end;
`;
const TextInput = styled.input`
  width: 100%;
  min-width: 0;
  height: 22px;
  padding: 0 1px 1px 5px;
  border: 1px solid ${(p) => (p.$active ? "#9cc4ec" : "#252525")};
  border-radius: 3px;
  outline: 0;
  background: #2d2d2d;
  color: #f4f4f4;
`;
const XYFields = styled.div`
  display: grid;
  grid-template-columns: 59fr 53fr 24px;
  align-items: center;
  gap: 5px;
`;
const LockButton = styled(Button)`
  padding: 0;
`;
const DarkRule = styled.div`
  height: 1px;
  margin: ${(p) => (p.$far ? "13px 0 4px" : "9px 0 6px")};
  background: #2b2b2b;
`;
const SubTitle = styled.h4`
  margin: 0;
  font-size: 11px;
  line-height: 26px;
  color: #f8f8f8;
`;
const Segments = styled.div`
  display: grid;
  grid-template-columns: ${(p) => p.$columns};
  height: 24px;
  margin-bottom: ${(p) => (p.$far ? 17 : 15)}px;
  border: 1px solid #232323;
  border-radius: 3px;
  overflow: hidden;
`;
const Segment = styled.button`
  min-width: 0;
  padding: 0;
  border: 0;
  background: ${(p) => (p.$on ? "#6080a0" : "#525252")};
  color: #f4f4f4;
  & + & {
    border-left: 1px solid #232323;
  }
  &:disabled {
    border-left-color: #525252;
    color: #8a8a8a;
  }
`;
const PathFields = styled.div`
  display: grid;
  grid-template-columns: 1fr 70px;
  align-items: center;
  gap: 4px;
`;
const SnapBox = styled.div`
  ${box}
  display: flex;
  flex-direction: column;
  justify-content: space-between;
  height: 174px;
`;
const SnapFooter = styled.div`
  display: grid;
  grid-template-columns: 75px 75px 31px;
  justify-content: flex-end;
  gap: 4px;
  padding: 4px;
  border-top: 1px solid #252525;
  background: #474747;
`;
const ColorFields = styled.div`
  display: flex;
  align-items: center;
  gap: 8px;
`;
const ColorButton = styled.button`
  width: 22px;
  height: 22px;
  padding: 2px;
  border: 1px solid #232323;
  border-radius: 3px;
  background: #5c5c5c;
`;
const ColorFill = styled.span`
  display: block;
  height: 16px;
  border: 1px solid #222;
  background: #828282;
`;
const OpacityFields = styled.div`
  display: grid;
  grid-template-columns: 45px 1fr;
  align-items: center;
  gap: 4px;
`;
const Slider = styled.input.attrs({ type: "range" })`
  appearance: none;
  width: 100%;
  min-width: 0;
  height: 8px;
  border: 1px solid #222;
  border-radius: 4px;
  background: #2f2f2f;
  &::-webkit-slider-thumb {
    appearance: none;
    width: 5px;
    height: 11px;
    border-radius: 1px;
    background: #e4e4e4;
  }
`;
const Selected = styled.div`
  flex: none;
  height: 20px;
  line-height: 20px;
`;
const StatusBar = styled.footer`
  flex: none;
  display: flex;
  align-items: center;
  height: 23px;
  padding: 1px 4px 0 5px;
  background: #414141;
  font-family: ${narrowFont};
`;
const statusCell = css`
  display: flex;
  height: 17px;
  border-right: 2px solid #353535;
`;
const StatusMain = styled.div`
  ${statusCell}
  width: 482px;
  gap: 13px;
`;
const StatusHint = styled.span`
  padding-left: 3px;
`;
const StatusCell = styled.div`
  ${statusCell}
  width: 486px;
`;
const PanelsButton = styled.button`
  align-self: flex-end;
  height: 18px;
  margin-left: auto;
  padding: 0 4px;
  border: 1px solid #222;
  border-radius: 3px;
  background: #505050;
  color: #f4f4f4;
  line-height: 16px;
`;
const Watermark = styled.div`
  position: absolute;
  right: 16px;
  bottom: 8px;
  font: 19px/26px "Liberation Sans", "Noto Sans CJK SC", sans-serif;
  color: #c0c0c0;
  text-shadow: 1px 1px 1px #222;
  pointer-events: none;
`;
